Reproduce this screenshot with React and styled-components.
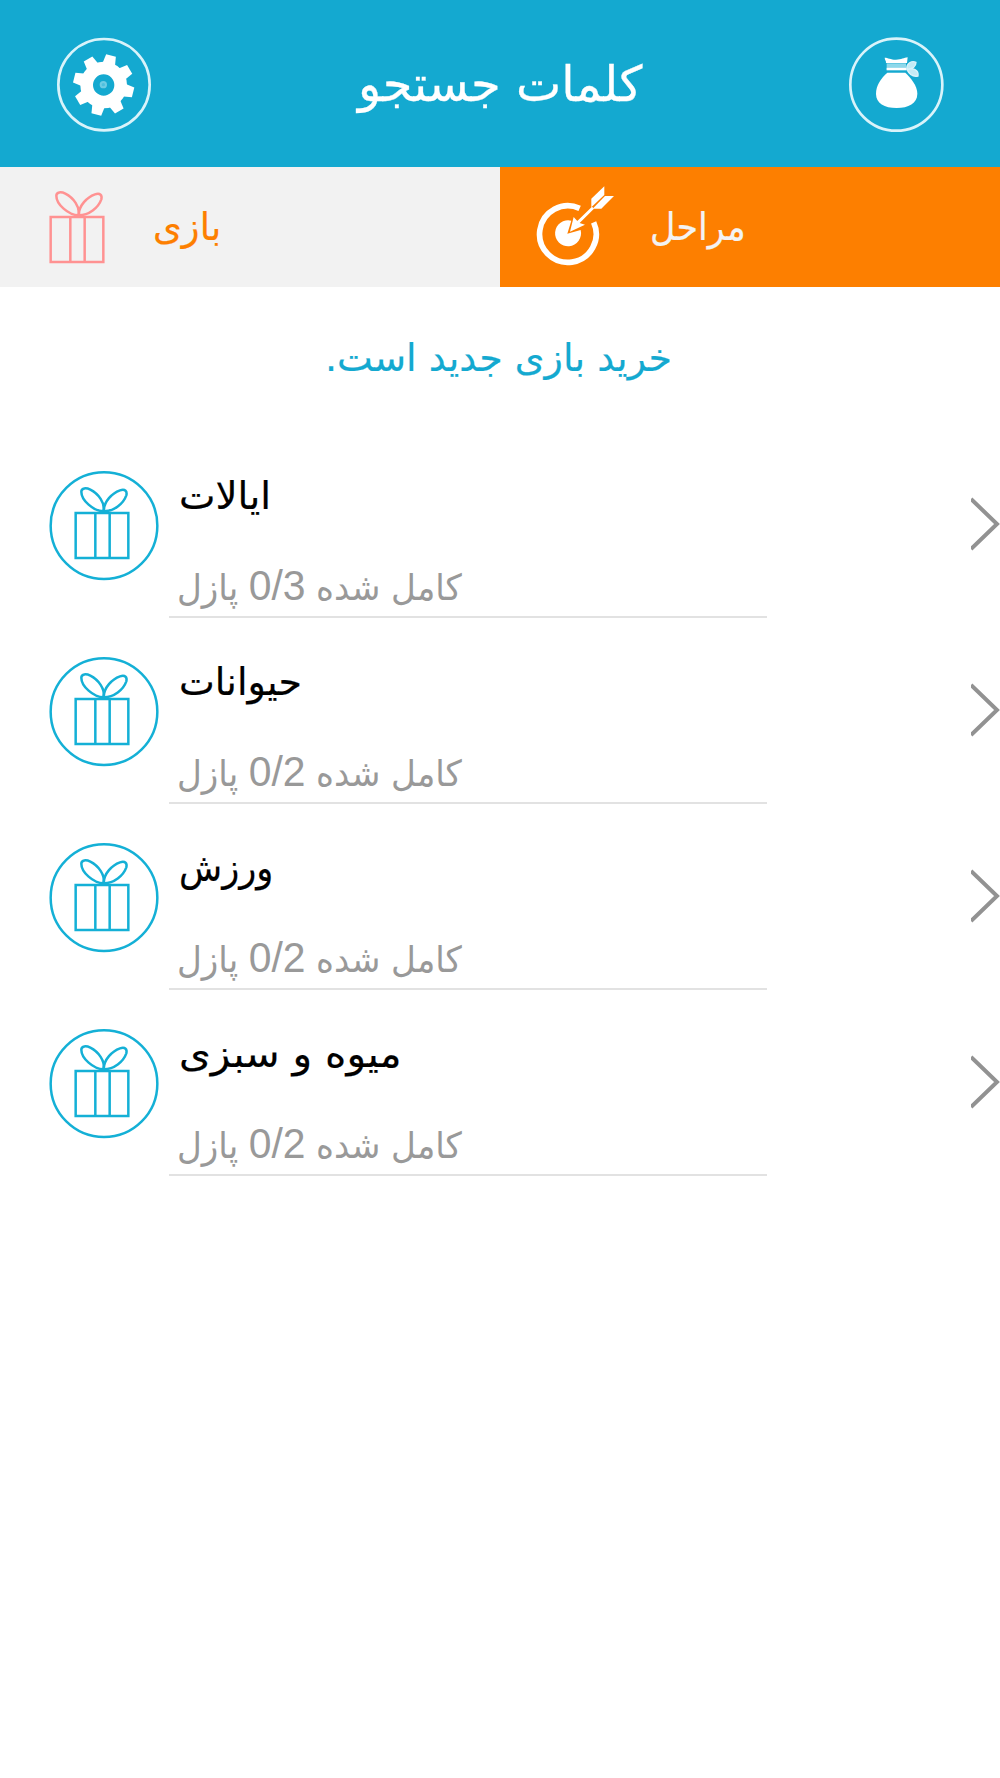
import React from "react";
import styled, { createGlobalStyle } from "styled-components";

const categories = [
  { id: 1, name: "ایالات", stretch: 1.02, done: "0/3" },
  { id: 2, name: "حیوانات", stretch: 1, done: "0/2" },
  { id: 3, name: "ورزش", stretch: 0.93, done: "0/2" },
  { id: 4, name: "میوه و سبزی", stretch: 1.07, done: "0/2" },
];

const teeth = [14, 59, 104, 149, 194, 239, 284, 329];

function GiftShape() {
  return (
    <>
      <rect x="5" y="78" width="158" height="135" />
      <path d="M64 78V213M107 78V213" />
      <path d="M89 73C58 72 22 40 22 14C22 2 37 2 49 8C73 20 94 48 89 73Z" />
      <path d="M89 73C89 43 115 18 138 10C154 5 160 13 157 25C148 50 120 73 89 73Z" />
    </>
  );
}

function GearIcon() {
  return (
    <RoundIcon viewBox="0 0 390 390">
      <circle cx="192" cy="194" r="137" fill="none" stroke="#d9f3fa" strokeWidth="8" />
      {teeth.map((angle) => (
        <path
          key={angle}
          d="M-20 -58L-15 -91H15L20 -58Z"
          transform={`translate(191 195) rotate(${angle})`}
          fill="#fff"
        />
      ))}
      <circle cx="191" cy="195" r="51" fill="none" stroke="#fff" strokeWidth="38" />
      <circle cx="190" cy="194" r="8" fill="#4fc0de" stroke="#6fcce4" strokeWidth="6" />
    </RoundIcon>
  );
}

function BagIcon() {
  return (
    <RoundIcon viewBox="0 0 390 390">
      <circle cx="199" cy="194" r="138" fill="none" stroke="#d9f3fa" strokeWidth="8" />
      <path d="M164 113C174 113 181 119 198 119C214 119 222 113 233 112L231 129H168C169 122 164 120 164 113Z" fill="#fff" />
      <path d="M170 130H228V151H170Z" fill="#8ed8ea" />
      <path d="M170 147H230" stroke="#fff" strokeWidth="7" />
      <path d="M172 158H226C242 174 262 196 262 221C262 250 235 264 200 264C163 264 138 250 138 221C138 195 154 174 172 158Z" fill="#fff" />
      <path d="M231 149C227 129 247 121 258 127C258 140 245 147 231 149C248 142 267 149 264 168C250 171 238 163 231 149Z" fill="#c4ebf5" stroke="#d9f3fa" strokeWidth="4" />
    </RoundIcon>
  );
}

function TargetIcon() {
  return (
    <TargetSvg viewBox="135 70 250 250">
      <path d="M269 146A85 85 0 1 0 311 188" fill="none" stroke="#fff" strokeWidth="17" />
      <path d="M244 183A39 39 0 1 0 272 211L232 222Z" fill="#fff" />
      <path d="M240 216L251 172L262 184L306 141L312 147L269 190L285 195Z" fill="#fff" />
      <path d="M304 143V117L343 80V106Z" fill="#fff" />
      <path d="M308 147L345 109H372L334 147Z" fill="#fff" />
    </TargetSvg>
  );
}

function Category({ name, stretch, done }) {
  return (
    <Row>
      <Badge viewBox="0 0 330 330">
        <circle cx="165" cy="164" r="160" />
        <g transform="translate(75 48)">
          <GiftShape />
        </g>
      </Badge>
      <RowBody>
        <Name dir="rtl" $stretch={stretch}>{name}</Name>
        <Progress dir="rtl">
          کامل شده <Count>{done}</Count> پازل
        </Progress>
      </RowBody>
      <Chevron viewBox="0 0 29 54">
        <path d="M0 2L26 27L0 52" />
      </Chevron>
    </Row>
  );
}

function App() {
  return (
    <Page>
      <GlobalStyle />
      <Header>
        <GearIcon />
        <Title dir="rtl">کلمات جستجو</Title>
        <BagIcon />
      </Header>
      <Tabs>
        <Tab>
          <TabGift viewBox="0 0 168 219">
            <GiftShape />
          </TabGift>
          <TabLabel dir="rtl" $left={48} $stretch={0.97}>بازی</TabLabel>
        </Tab>
        <Tab $active>
          <TargetIcon />
          <TabLabel dir="rtl" $left={32} $stretch={0.92}>مراحل</TabLabel>
        </Tab>
      </Tabs>
      <Notice dir="rtl">
        <NoticeText>خرید بازی جدید است.</NoticeText>
      </Notice>
      <List>
        {categories.map((category) => (
          <Category key={category.id} {...category} />
        ))}
      </List>
    </Page>
  );
}

const GlobalStyle = createGlobalStyle`
  * {
    box-sizing: border-box;
  }

  body {
    margin: 0;
    background: #fff;
  }
`;

const Page = styled.div`
  width: 1000px;
  min-height: 1778px;
  overflow: hidden;
  background: #fff;
  font-family: "DejaVu Sans", sans-serif;
`;

const Header = styled.header`
  display: flex;
  justify-content: space-between;
  height: 167px;
  padding: 20px 40px 0;
  background: #14a9d0;
`;

const RoundIcon = styled.svg`
  flex: none;
  width: 130px;
  height: 130px;
`;

const Title = styled.h1`
  margin: 0;
  color: #fff;
  font-size: 49px;
  font-weight: normal;
  line-height: 129px;
  white-space: nowrap;
  transform: scaleX(0.98);
  -webkit-text-stroke: 0.3px;
`;

const Tabs = styled.nav`
  display: grid;
  grid-template-columns: 1fr 1fr;
  height: 120px;
`;

const Tab = styled.div`
  display: flex;
  align-items: flex-start;
  color: ${(props) => (props.$active ? "#f3f3f3" : "#fd7f00")};
  background: ${(props) => (props.$active ? "#fd7f00" : "#f2f2f2")};
`;

const TabGift = styled.svg`
  width: 56px;
  height: 73px;
  margin: 24px 0 0 49px;
  fill: none;
  stroke: #ff9292;
  stroke-width: 7.5;
`;

const TargetSvg = styled.svg`
  width: 83.3px;
  height: 83.3px;
  margin: 16px 0 0 35px;
`;

const TabLabel = styled.span`
  margin-left: ${(props) => props.$left}px;
  font-size: 38px;
  line-height: 120px;
  white-space: nowrap;
  transform: scaleX(${(props) => props.$stretch});
  transform-origin: left;
  -webkit-text-stroke: 0.2px;
`;

const Notice = styled.p`
  display: flex;
  justify-content: center;
  height: 145px;
  margin: 0;
  padding-right: 3px;
  color: #14a9d0;
  font-size: 38px;
  line-height: 142px;
`;

const NoticeText = styled.span`
  white-space: nowrap;
  -webkit-text-stroke: 0.2px;
`;

const List = styled.div`
  display: flex;
  flex-direction: column;
`;

const Row = styled.div`
  display: flex;
  height: 186px;
  padding-left: 49px;
`;

const Badge = styled.svg`
  flex: none;
  width: 110px;
  height: 110px;
  margin: 39px 10px 0 0;
  fill: none;
  stroke: #14b0d6;
  stroke-width: 7.5;
`;

const RowBody = styled.div`
  display: flex;
  flex-direction: column;
  align-items: flex-start;
  width: 598px;
  padding: 34px 0 0 8px;
  border-bottom: 2px solid #e2e2e2;
`;

const Name = styled.span`
  margin-left: 2px;
  color: #000;
  font-size: 38px;
  line-height: 60px;
  white-space: nowrap;
  transform: scaleX(${(props) => props.$stretch});
  transform-origin: left;
  -webkit-text-stroke: 0.2px;
`;

const Progress = styled.span`
  margin-top: 32px;
  color: #999;
  font-family: "Liberation Sans", "DejaVu Sans", sans-serif;
  font-size: 36px;
  line-height: 60px;
  white-space: nowrap;
  word-spacing: 1px;
  transform: scaleX(0.95);
  transform-origin: left;
`;

const Count = styled.span`
  font-size: 43px;
  line-height: 1;
`;

const Chevron = styled.svg`
  width: 29px;
  height: 54px;
  margin: 65px 0 0 auto;
  fill: none;
  stroke: #929292;
  stroke-width: 4;
`;

export default App;
